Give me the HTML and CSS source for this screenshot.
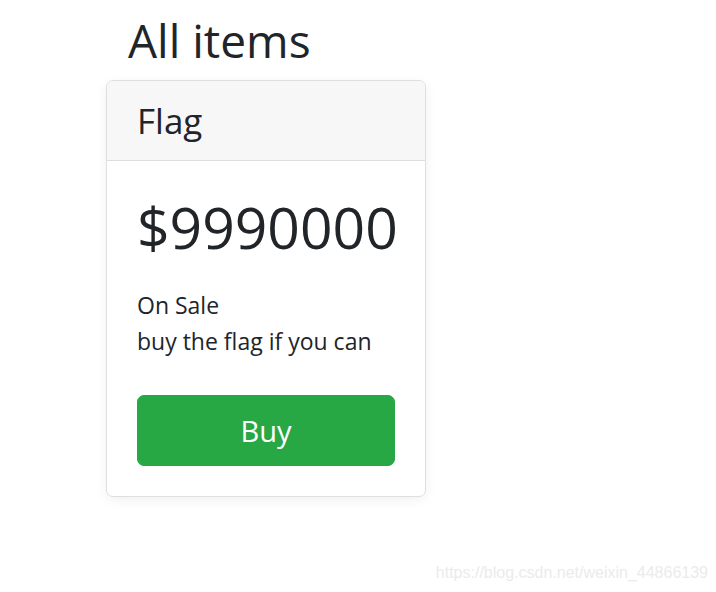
FILE: index.html
```html
<!DOCTYPE html>
<html lang="en">
<head>
<meta charset="utf-8">
<title>All items</title>
<link rel="stylesheet" href="styles.css">
</head>
<body>
<main class="page">
  <h2 class="title">All items</h2>
  <div class="card">
    <div class="card-header">
      <h4 class="card-name">Flag</h4>
    </div>
    <div class="card-body">
      <h1 class="price">$9990000</h1>
      <ul class="features">
        <li>On Sale</li>
        <li>buy the flag if you can</li>
      </ul>
      <button class="btn-buy" type="button">Buy</button>
    </div>
  </div>
</main>
<div class="watermark">https://blog.csdn.net/weixin_44866139</div>
</body>
</html>
```

FILE: styles.css
```css
html, body {
  margin: 0;
  padding: 0;
  background: #ffffff;
}

body {
  font-family: "Open Sans", "Noto Sans", sans-serif;
  color: #212529;
  width: 716px;
  height: 592px;
  position: relative;
  overflow: hidden;
}

.page {
  padding: 11px 0 0 106px;
}

.title {
  margin: 0 0 11px 22px;
  font-size: 46px;
  line-height: 58px;
  font-weight: 400;
}

.card {
  width: 320px;
  box-sizing: border-box;
  border: 1px solid #dfdfdf;
  border-radius: 7px;
  background: #ffffff;
  box-shadow: 0 3px 12px rgba(0, 0, 0, 0.06);
  overflow: hidden;
}

.card-header {
  padding: 18px 30px;
  background: #f7f7f7;
  border-bottom: 1px solid #dfdfdf;
}

.card-name {
  margin: 0;
  font-size: 35px;
  line-height: 43px;
  font-weight: 400;
}

.card-body {
  padding: 30px;
}

.price {
  margin: 0 0 12px;
  font-size: 57px;
  line-height: 72px;
  font-weight: 400;
}

.features {
  margin: 24px 0 36px;
  padding: 0;
  list-style: none;
  font-size: 23px;
  line-height: 36px;
}

.btn-buy {
  display: block;
  width: 100%;
  box-sizing: border-box;
  padding: 12px 24px;
  font-family: inherit;
  font-size: 29px;
  line-height: 45px;
  color: #ffffff;
  background: #28a745;
  border: 1px solid #28a745;
  border-radius: 7px;
  cursor: pointer;
}

.watermark {
  position: absolute;
  right: 8px;
  top: 563px;
  font-family: "Liberation Sans", Arial, sans-serif;
  font-size: 16px;
  line-height: 20px;
  color: #ebebeb;
}
```
